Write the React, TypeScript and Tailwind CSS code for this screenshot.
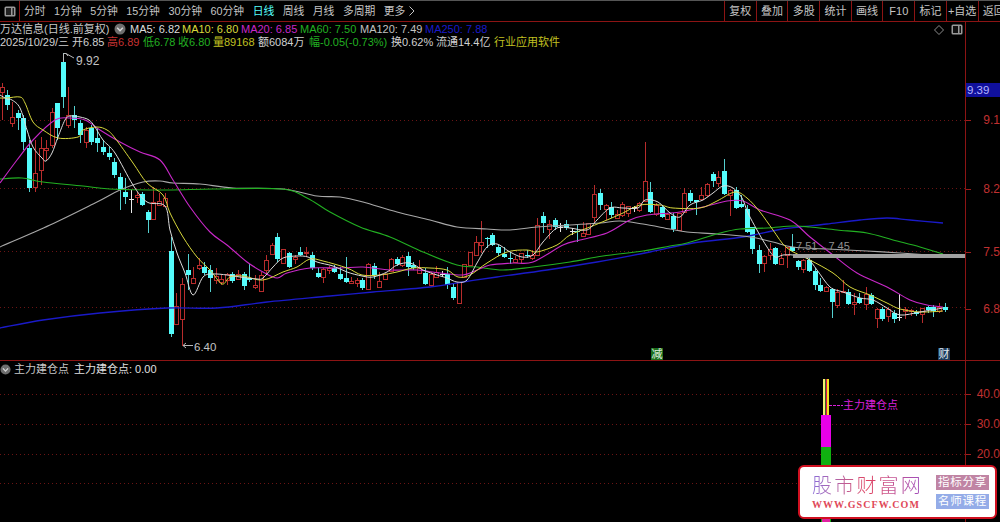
import React from "react";

type C = [number, number, number, number, number, string?];
// x, high, bodyTop, bodyBottom, low, kind (r red, c cyan, w white)
const candles: C[] = [
  [2,83,87,92,120,"r"],[7,90,95,105,110,"c"],[12,102,117,123,127,"r"],[18,110,113,118,130,"c"],[23,115,118,142,150,"c"],
  [29,140,148,188,192,"c"],[35,140,173,187,192,"r"],[41,137,148,170,185,"r"],[46,140,148,150,160,"r"],[52,108,112,145,148,"r"],
  [57,103,103,128,140,"c"],[63,53,62,97,108,"c"],[68,87,115,125,128,"r"],[74,106,115,120,128,"c"],[80,120,123,135,143,"c"],
  [86,127,130,142,148,"r"],[91,125,128,142,145,"c"],[97,128,138,143,152,"c"],[103,140,147,152,155,"c"],[109,147,153,157,160,"c"],
  [114,158,162,175,178,"c"],[120,173,177,190,210,"c"],[125,178,192,197,204,"c"],[131,190,199,200,213,"w"],[137,192,195,197,203,"r"],
  [142,192,194,205,206,"c"],[148,210,212,220,233,"c"],[153,187,202,219,219,"r"],[159,193,201,205,205,"r"],[165,193,198,206,207,"r"],
  [171,237,251,334,337,"c"],[176,293,306,324,325,"r"],[182,278,284,319,346,"r"],[188,254,270,275,290,"c"],[193,267,278,283,283,"r"],
  [199,258,265,268,270,"r"],[204,262,267,273,275,"c"],[210,265,270,278,292,"c"],[216,268,276,280,284,"r"],[221,275,279,282,285,"r"],
  [227,273,274,280,285,"r"],[232,272,274,281,283,"c"],[238,270,274,279,280,"r"],[244,272,274,286,290,"c"],[249,264,278,280,282,"c"],
  [255,275,285,287,289,"r"],[261,272,275,291,292,"r"],[266,255,260,270,275,"r"],[272,243,245,254,255,"r"],[277,233,237,259,262,"c"],
  [283,249,249,263,263,"r"],[289,252,253,267,268,"c"],[295,255,257,259,264,"r"],[300,247,252,255,256,"c"],[306,247,252,253,257,"r"],
  [312,252,255,268,270,"c"],[318,268,273,277,278,"c"],[323,268,269,277,283,"r"],[329,266,268,270,274,"r"],[334,265,268,272,273,"c"],
  [340,267,274,279,280,"c"],[346,257,278,282,283,"c"],[351,277,281,283,284,"r"],[357,278,280,283,287,"r"],[362,278,280,288,290,"c"],
  [368,263,264,289,289,"r"],[374,263,266,275,279,"c"],[379,272,281,287,287,"r"],[385,273,274,279,280,"r"],[391,258,259,271,272,"r"],
  [397,257,259,264,266,"c"],[402,255,257,265,267,"r"],[408,252,256,267,276,"c"],[413,262,265,268,270,"c"],[419,260,268,273,273,"r"],
  [425,268,273,284,285,"c"],[431,272,274,285,287,"r"],[436,266,272,277,278,"r"],[442,271,274,275,277,"w"],[447,267,274,285,289,"c"],
  [453,283,287,298,300,"c"],[459,282,282,303,303,"r"],[464,264,264,277,278,"r"],[470,252,252,265,265,"r"],[476,236,242,255,255,"r"],
  [481,221,242,245,253,"r"],[487,237,238,239,248,"c"],[492,233,235,245,246,"c"],[498,245,247,253,256,"c"],[504,247,254,257,258,"c"],
  [510,252,258,259,264,"c"],[515,256,259,262,262,"r"],[521,253,253,259,263,"r"],[527,250,255,256,258,"c"],[532,250,255,258,260,"r"],
  [537,218,225,255,255,"r"],[543,212,216,223,233,"c"],[549,220,224,229,239,"r"],[555,218,220,227,230,"c"],[560,223,227,228,232,"w"],
  [566,220,224,228,230,"c"],[572,228,231,232,235,"w"],[577,225,231,232,242,"c"],[583,222,233,236,237,"r"],[588,223,223,234,235,"r"],
  [594,185,194,217,223,"r"],[600,189,193,205,210,"c"],[606,204,205,209,220,"r"],[611,202,207,215,218,"c"],[617,210,214,218,219,"r"],
  [622,202,204,215,217,"r"],[628,206,206,213,217,"r"],[634,206,207,209,212,"w"],[639,202,203,210,212,"r"],[645,142,181,201,202,"r"],
  [650,182,192,212,213,"c"],[656,203,205,214,216,"r"],[662,206,207,217,218,"c"],[667,213,214,219,220,"r"],[673,213,216,229,232,"c"],
  [679,213,213,230,230,"r"],[684,188,193,212,213,"r"],[690,190,193,201,203,"c"],[696,200,200,202,215,"c"],[701,187,195,199,200,"r"],
  [707,183,184,195,197,"r"],[713,172,174,181,187,"c"],[718,171,177,183,187,"r"],[724,159,171,194,195,"c"],[730,189,190,195,216,"r"],
  [736,187,190,208,209,"c"],[741,195,204,207,208,"c"],[747,205,209,232,233,"c"],[752,227,227,249,254,"c"],[759,245,250,264,273,"c"],
  [764,255,256,263,272,"r"],[770,243,249,255,260,"r"],[775,247,248,264,265,"c"],[781,253,258,264,265,"r"],[787,247,247,255,268,"r"],
  [792,234,247,251,252,"c"],[798,260,261,267,270,"c"],[803,259,260,269,273,"r"],[809,258,260,271,272,"c"],[815,268,271,285,290,"c"],
  [820,278,285,291,292,"c"],[826,286,287,291,291,"r"],[832,288,289,302,318,"c"],[837,289,292,305,308,"r"],[843,280,291,292,293,"r"],
  [848,289,292,304,305,"c"],[854,293,302,304,315,"r"],[859,293,298,303,304,"c"],[866,287,294,304,310,"r"],[871,293,295,304,305,"c"],
  [877,308,309,318,328,"r"],[882,307,309,319,321,"c"],[888,307,309,316,322,"r"],[894,310,313,319,323,"c"],[899,294,317,318,321,"w"],
  [905,307,309,311,319,"r"],[911,309,310,311,316,"r"],[916,310,312,314,316,"c"],[922,308,308,314,323,"r"],[928,306,307,310,313,"c"],
  [933,305,307,311,317,"c"],[939,303,307,311,313,"r"],[945,303,307,310,312,"c"],
];

const ma5 = "0,95 7,99 12,100 20,108 27,130 33,147 42,158 46,161 52,153 58,137 65,120 70,116 80,117 89,120 95,127 103,140 115,153 133,185 147,202 165,206 170,230 177,253 185,273 193,295 203,277 213,274 227,275 240,277 257,279 263,278 273,267 283,258 297,256 308,257 317,262 333,266 347,272 362,276 373,277 387,272 397,265 410,263 423,270 437,275 447,278 457,282 467,280 477,263 487,247 497,244 510,252 522,257 533,255 543,242 557,228 570,228 587,230 597,220 610,208 623,208 638,208 645,200 658,202 670,213 680,217 690,205 703,200 713,193 723,186 733,188 742,198 748,213 757,230 767,247 775,257 783,255 793,255 807,258 817,270 830,287 843,292 860,298 873,300 887,308 900,315 920,312 943,308";
const ma10 = "0,98 7,98 20,97 25,103 33,122 43,130 58,138 78,137 83,130 97,127 107,130 115,138 133,163 147,183 163,195 170,213 183,237 197,257 210,270 222,284 230,277 243,276 263,280 283,272 297,267 310,259 323,261 347,268 362,275 380,275 397,272 413,268 430,268 447,270 458,277 470,275 487,263 507,252 527,250 537,252 557,245 570,235 590,227 607,220 623,213 640,205 660,205 673,208 700,208 717,201 735,192 747,198 760,212 773,230 787,248 810,260 833,273 850,287 870,295 887,303 900,309 920,312 943,311";
const ma20 = "0,183 17,160 33,140 55,120 70,118 85,120 100,130 120,142 140,152 160,160 173,180 190,207 210,232 227,245 247,262 263,272 277,278 287,273 310,268 340,268 363,267 390,270 417,270 440,273 463,275 477,270 490,265 513,263 533,262 563,245 580,240 607,233 630,220 647,215 670,213 680,212 703,207 727,201 743,201 760,210 790,220 810,237 833,255 857,273 887,287 910,300 927,305 943,307";
const ma60 = "0,179 22,178 43,182 83,186 110,189 167,190 213,189 282,189 307,198 330,212 360,227 390,237 423,252 457,265 477,267 503,270 533,267 570,262 603,256 643,251 670,246 687,243 720,233 740,229 767,228 793,226 810,227 837,230 867,233 893,240 920,247 943,254";
const ma120 = "0,247 50,225 97,202 120,190 143,182 160,181 173,183 200,184 233,188 283,189 317,196 340,197 363,202 397,212 430,220 457,227 487,229 510,230 537,227 570,225 600,223 620,221 643,224 670,229 687,232 717,234 750,237 773,242 793,247 827,249 867,251 900,253 943,256";
const ma250 = "0,328 43,320 100,313 167,308 217,308 267,302 330,296 373,292 430,287 463,282 497,277 547,270 597,262 650,252 693,243 743,237 777,230 800,227 827,224 860,220 887,218 910,220 943,223";

// Catmull-Rom smoothing so the averages curve rather than kink
function smooth(points: string): string {
  const p = points.split(" ").map((s) => s.split(",").map(Number));
  let d = `M${p[0][0]} ${p[0][1]}`;
  for (let i = 0; i < p.length - 1; i++) {
    const a = p[Math.max(i - 1, 0)];
    const b = p[i];
    const c = p[i + 1];
    const e = p[Math.min(i + 2, p.length - 1)];
    const c1x = b[0] + (c[0] - a[0]) / 6;
    const c1y = b[1] + (c[1] - a[1]) / 6;
    const c2x = c[0] - (e[0] - b[0]) / 6;
    const c2y = c[1] - (e[1] - b[1]) / 6;
    d += ` C${c1x.toFixed(1)} ${c1y.toFixed(1)} ${c2x.toFixed(1)} ${c2y.toFixed(1)} ${c[0]} ${c[1]}`;
  }
  return d;
}

const periods = ["分时", "1分钟", "5分钟", "15分钟", "30分钟", "60分钟", "日线", "周线", "月线", "多周期", "更多"];
const tools = ["复权", "叠加", "多股", "统计", "画线", "F10", "标记", "+自选", "返回"];

function Candle({ c }: { c: C }) {
  const [x, hi, top, bot, lo, k] = c;
  if (k === "w") {
    return (
      <g stroke="#e8e8e8" shapeRendering="crispEdges">
        <line x1={x + 0.5} x2={x + 0.5} y1={hi} y2={lo} />
        <line x1={x - 2} x2={x + 3} y1={top + 0.5} y2={top + 0.5} />
      </g>
    );
  }
  if (k === "c") {
    return (
      <g shapeRendering="crispEdges">
        <line x1={x + 0.5} x2={x + 0.5} y1={hi} y2={lo} stroke="#54d0d0" />
        <rect x={x - 2} y={top} width={5} height={bot - top} fill="#54fcfc" />
      </g>
    );
  }
  return (
    <g shapeRendering="crispEdges" stroke="#b82c2c">
      <line x1={x + 0.5} x2={x + 0.5} y1={hi} y2={top} />
      <line x1={x + 0.5} x2={x + 0.5} y1={bot} y2={lo} />
      <rect x={x - 1.5} y={top + 0.5} width={4} height={bot - top} fill="#000" />
    </g>
  );
}

function Collapse() {
  return (
    <svg width="12" height="12" viewBox="0 0 12 12" className="shrink-0">
      <circle cx="6" cy="6" r="5.5" fill="#6e6e6e" />
      <path d="M3.2 4.8 L6 7.8 L8.8 4.8" fill="none" stroke="#d8d8d8" strokeWidth="1.4" />
    </svg>
  );
}

function AxisLabel({ y, text }: { y: number; text: string }) {
  return (
    <div className="absolute left-0 right-0 flex items-center h-[14px]" style={{ top: y - 7 }}>
      <div className="w-[5px] h-px bg-[#a01c1c]" />
      <span className="ml-auto text-[#c03030] text-[12px] leading-[14px] whitespace-nowrap">{text}</span>
    </div>
  );
}

export default function App() {
  return (
    <div
      className="w-[1000px] h-[522px] bg-black overflow-hidden flex flex-col relative text-[11px] leading-[13px] text-[#d0d0d0]"
      style={{ fontFamily: "'Liberation Sans','Noto Sans CJK SC',sans-serif" }}
    >
      {/* toolbar */}
      <div className="h-[22px] shrink-0 flex items-center border-b border-[#8c1414] border-t border-t-[#555]">
        <div className="w-[20px] h-full flex items-center justify-center border-r border-[#8c1414] shrink-0">
          <svg width="12" height="11" viewBox="0 0 12 11">
            <rect x="0.5" y="0.5" width="11" height="10" rx="1.5" fill="#999" />
            <rect x="2" y="2" width="5" height="7" fill="#222" />
            <rect x="8.5" y="2" width="1.5" height="7" fill="#222" />
          </svg>
        </div>
        <div className="flex items-center gap-[8.5px] pl-[4px] w-[704px] shrink-0">
          {periods.map((p) => (
            <span key={p} className={p === "日线" ? "text-[#54fcfc] text-[10.8px]" : "text-[#c4c4c4] text-[10.8px]"}>
              {p}
            </span>
          ))}
          <svg width="6" height="10" viewBox="0 0 6 10" className="-ml-[5px]">
            <path d="M0.5 0.5 L5 5 L0.5 9.5" fill="none" stroke="#c4c4c4" />
          </svg>
        </div>
        <div className="flex h-full shrink-0">
          {tools.map((t) => (
            <div key={t} className="w-[31.7px] h-full border-l border-[#8c1414] flex items-center justify-center text-[#c4c4c4] text-[11px] whitespace-nowrap">
              {t}
            </div>
          ))}
        </div>
      </div>

      {/* upper panel */}
      <div className="h-[339px] shrink-0 flex border-b border-[#8c1414]">
        <div className="w-[965px] shrink-0 relative">
          <svg className="absolute inset-0" width="965" height="338" viewBox="0 22 965 338">
            {[120.5, 188.5, 251.5, 307.5].map((y) => (
              <line key={y} x1="0" x2="965" y1={y} y2={y} stroke="#6a1414" strokeDasharray="1 3" />
            ))}
            {candles.map((c, i) => (
              <Candle key={i} c={c} />
            ))}
            <path d={smooth(ma250)} fill="none" stroke="#1a1ac8" strokeWidth="1.3" />
            <path d={smooth(ma120)} fill="none" stroke="#a8a8a8" strokeWidth="1.1" />
            <path d={smooth(ma60)} fill="none" stroke="#22b022" strokeWidth="1.1" />
            <path d={smooth(ma20)} fill="none" stroke="#c828c8" strokeWidth="1.1" />
            <path d={smooth(ma10)} fill="none" stroke="#d8d83c" strokeWidth="1" />
            <path d={smooth(ma5)} fill="none" stroke="#dcdcdc" strokeWidth="1" />
            <rect x="793" y="254" width="172" height="4" fill="#a0a0a0" />
            <path d="M63.5 62 L63.5 53.5 L66 53.5 L74 58 M66 53.5 L68 56" fill="none" stroke="#b8b8b8" />
            <path d="M183 345.5 L193 345.5 M186 343 L183 345.5 L186 348" fill="none" stroke="#b8b8b8" />
          </svg>

          {/* quote rows */}
          <div className="relative flex items-center h-[14px] whitespace-nowrap">
            <span className="w-[114px] shrink-0 text-[#c8c8c8]">万达信息(日线.前复权)</span>
            <Collapse />
            <div className="flex ml-[4px]">
              <span className="w-[52px] text-[#dcdcdc]">MA5: 6.82</span>
              <span className="w-[59px] text-[#d8d83c]">MA10: 6.80</span>
              <span className="w-[59px] text-[#c828c8]">MA20: 6.85</span>
              <span className="w-[60px] text-[#22b022]">MA60: 7.50</span>
              <span className="w-[65px] text-[#c0c0c0]">MA120: 7.49</span>
              <span className="text-[#1a1ac8]">MA250: 7.88</span>
            </div>
          </div>
          <div className="relative flex items-center h-[13px] whitespace-nowrap">
            <span className="w-[72px]">2025/10/29/三</span>
            <span className="w-[35px]">开6.85</span>
            <span className="w-[36px] text-[#c83232]">高6.89</span>
            <span className="w-[35px] text-[#22b022]">低6.78</span>
            <span className="w-[35px] text-[#22b022]">收6.80</span>
            <span className="w-[45px] text-[#c0c020]">量89168</span>
            <span className="w-[51px]">额6084万</span>
            <span className="w-[82px] text-[#22b022]">幅-0.05(-0.73%)</span>
            <span className="w-[45px]">换0.62%</span>
            <span className="w-[58px]">流通14.4亿</span>
            <span className="text-[#c0c020]">行业应用软件</span>
          </div>

          {/* chart annotations */}
          <span className="absolute left-[76px] top-[32px] text-[#c4c4c4] text-[12px] leading-[14px]">9.92</span>
          <span className="absolute left-[194px] top-[318px] text-[#c4c4c4] text-[11.5px] leading-[14px]">6.40</span>
          <span className="absolute left-[796px] top-[217px] text-[#909090] text-[11px] leading-[14px] whitespace-nowrap">7.51→7.45</span>
          <span className="absolute left-[651px] top-[326px] w-[12px] h-[12px] bg-[#1c6e1c] text-[#e0f0e0] text-[11px] leading-[12px] text-center">减</span>
          <span className="absolute left-[938px] top-[326px] w-[12px] h-[12px] bg-[#1c3c5c] text-[#e0e8f0] text-[11px] leading-[12px] text-center">财</span>
          <svg width="12" height="12" viewBox="0 0 12 12" className="absolute left-[933px] top-[2px]">
            <path d="M6 1.5 L10.5 6 L6 10.5 L1.5 6 Z" fill="none" stroke="#8c8c8c" />
          </svg>
          <svg width="12" height="11" viewBox="0 0 12 11" className="absolute left-[951px] top-[2px]">
            <rect x="0.5" y="0.5" width="11" height="10" rx="1.5" fill="#999" />
            <rect x="2" y="2" width="5" height="7" fill="#111" />
            <rect x="8.5" y="2" width="1.5" height="7" fill="#111" />
          </svg>
        </div>
        <div className="flex-1 relative border-l border-[#8c1414]">
          <AxisLabel y={98} text="9.1" />
          <AxisLabel y={167} text="8.2" />
          <AxisLabel y={230} text="7.5" />
          <AxisLabel y={287} text="6.8" />
          <div className="absolute left-0 right-0 top-[61px] h-[14px] bg-[#10109c] text-[#b4b4ff] text-[11.5px] leading-[14px] pl-px">9.39</div>
        </div>
      </div>

      {/* lower panel */}
      <div className="flex-1 flex min-h-0">
        <div className="w-[965px] shrink-0 relative">
          <svg className="absolute inset-0" width="965" height="161" viewBox="0 361 965 161">
            {[394.5, 424.5, 454.5, 483.5].map((y) => (
              <line key={y} x1="0" x2="965" y1={y} y2={y} stroke="#6a1414" strokeDasharray="1 3" />
            ))}
            <g shapeRendering="crispEdges">
              <rect x="823" y="379" width="2" height="36" fill="#f4f070" />
              <rect x="825" y="379" width="1" height="36" fill="#386028" />
              <rect x="826" y="379" width="1" height="36" fill="#e01048" />
              <rect x="827" y="379" width="2" height="36" fill="#f0e020" />
              <rect x="821" y="415" width="10" height="32" fill="#e800e8" />
              <rect x="821" y="447" width="10" height="75" fill="#10b010" />
            </g>
            <line x1="829" x2="843" y1="405.5" y2="405.5" stroke="#d820d8" strokeDasharray="3 1" />
          </svg>
          <div className="relative flex items-center h-[15px] mt-px whitespace-nowrap">
            <svg width="11" height="11" viewBox="0 0 12 12" className="shrink-0">
              <circle cx="6" cy="6" r="5.5" fill="#6e6e6e" />
              <path d="M3.2 4.8 L6 7.8 L8.8 4.8" fill="none" stroke="#d8d8d8" strokeWidth="1.4" />
            </svg>
            <span className="ml-[3px] w-[60px] text-[#c8c8c8]">主力建仓点</span>
            <span className="text-[#e0e0e0]">主力建仓点: 0.00</span>
          </div>
          <span className="absolute left-[843px] top-[38px] text-[#d820d8] text-[11px] leading-[13px] whitespace-nowrap">主力建仓点</span>
        </div>
        <div className="flex-1 relative border-l border-[#8c1414]">
          <AxisLabel y={33} text="40.0" />
          <AxisLabel y={63} text="30.0" />
          <AxisLabel y={93} text="20.0" />
        </div>
      </div>

      {/* watermark */}
      <div className="absolute left-[798px] top-[465px] w-[199px] h-[54px] bg-white rounded-[6px] border-2 border-[#d01020] flex items-center justify-between pl-[12px] pr-[6px]">
        <div className="flex flex-col items-start">
          <span
            className="block text-[20px] leading-[20px] tracking-[2.2px] whitespace-nowrap bg-gradient-to-r from-[#8a6cd8] via-[#e04060] to-[#a050c0] bg-clip-text text-transparent"
            style={{ fontFamily: "'Noto Sans CJK SC',sans-serif", fontWeight: 300 }}
          >
            股市财富网
          </span>
          <span
            className="block mt-[4px] text-[10px] leading-[11px] font-bold text-[#e04858] whitespace-nowrap tracking-[1.05px]"
            style={{ fontFamily: "'Liberation Serif',serif" }}
          >
            WWW.GSCFW.COM
          </span>
        </div>
        <div className="flex flex-col gap-[4px]">
          <span className="w-[53px] h-[15px] bg-[#c084a4] text-white text-[11.5px] leading-[15px] text-center tracking-[0.8px] whitespace-nowrap">指标分享</span>
          <span className="w-[53px] h-[15px] bg-[#94ace8] text-white text-[11.5px] leading-[15px] text-center tracking-[0.8px] whitespace-nowrap">名师课程</span>
        </div>
      </div>
      <div className="absolute left-[822px] top-[519px] w-[8px] h-[3px] bg-[#e020a0]" />
    </div>
  );
}
